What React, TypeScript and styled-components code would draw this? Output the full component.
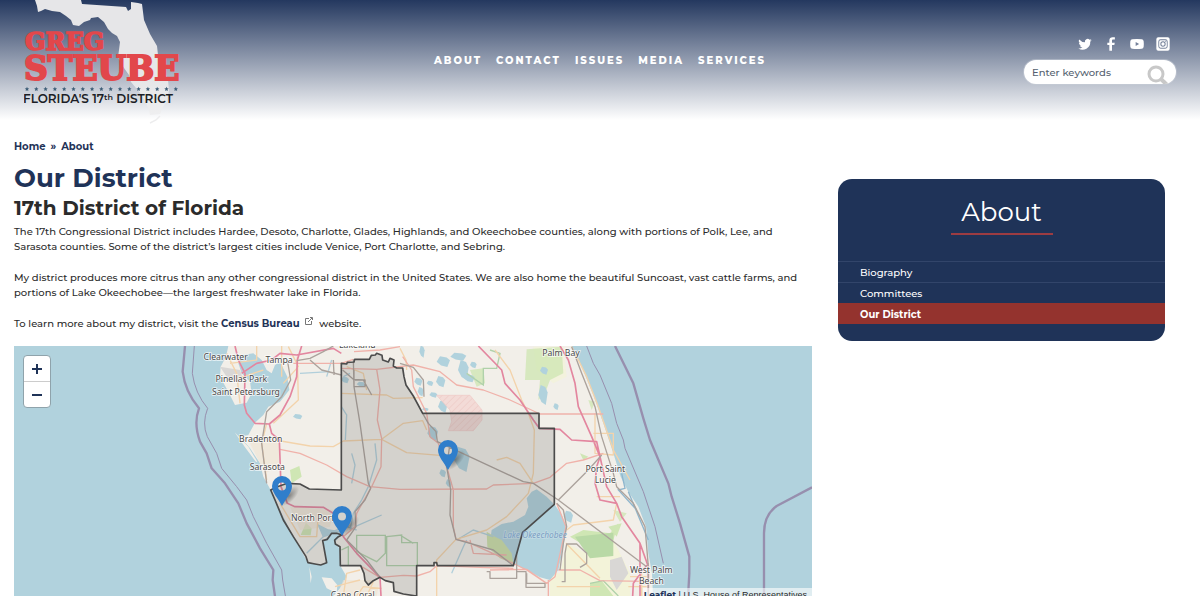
import React from 'react';
import styled, { createGlobalStyle, css } from 'styled-components';

const navy = '#1f3358';
const sans = "Montserrat, Inter, 'Open Sans', sans-serif";

const GlobalStyle = createGlobalStyle`
  * { box-sizing: border-box; }
  body {
    margin: 0;
    background: #fff;
    color: #2b2b2b;
    font-family: ${sans};
    font-size: 10px;
    font-weight: 500;
    line-height: 15px;
  }
  a { color: inherit; text-decoration: none; }
  h1, h2, p, ul, ol { margin: 0; padding: 0; }
  ul, ol { list-style: none; }
`;

const Page = styled.div`
  height: 100vh;
  overflow: hidden;
`;

const Header = styled.header`
  display: grid;
  grid-template-columns: 1fr auto 1fr;
  align-items: start;
  height: 124px;
  padding: 0 24px;
  background: linear-gradient(#24385f, #fff 120px);
`;

const LogoLink = styled.a`
  display: block;
  width: 160px;
  height: 124px;
`;

const Nav = styled.nav`
  display: flex;
  gap: 14px;
  padding-top: 53px;
`;

const NavLink = styled.a`
  color: #fff;
  font-weight: 800;
  letter-spacing: 2px;
  text-transform: uppercase;
`;

const Tools = styled.div`
  display: flex;
  flex-direction: column;
  align-items: flex-end;
  gap: 8px;
  padding-top: 36px;
`;

const Social = styled.div`
  display: flex;
  gap: 10px;
  padding-right: 5px;
`;

const SocialLink = styled.a`
  display: flex;
  width: 16px;
  height: 16px;
  color: #fff;
`;

const SearchForm = styled.form`
  display: flex;
  width: 152px;
  height: 24px;
  border-radius: 12px;
  background: #fff;
  overflow: hidden;
  box-shadow: 0 0 0 1px rgba(200, 205, 215, 0.5);
`;

const SearchInput = styled.input`
  flex: 1;
  min-width: 0;
  padding: 0 0 0 8px;
  border: 0;
  outline: 0;
  background: none;
  font: 500 10px ${sans};
  &::placeholder { color: #555f70; opacity: 1; }
`;

const SearchButton = styled.button`
  display: flex;
  width: 30px;
  padding: 4px 0 0;
  border: 0;
  background: none;
`;

const Main = styled.main`
  display: grid;
  grid-template-columns: minmax(0, 798fr) minmax(0, 327fr);
  gap: 26px;
  align-items: start;
  padding: 15px 35px 0 14px;
`;

const Breadcrumb = styled.ol`
  display: flex;
  gap: 5px;
  color: ${navy};
  font-weight: 700;
`;

const Title = styled.h1`
  padding-top: 8px;
  color: ${navy};
  font-size: 26px;
  line-height: 32px;
  font-weight: 700;
`;

const Subtitle = styled.h2`
  padding-bottom: 2px;
  font-size: 20px;
  line-height: 28px;
  font-weight: 700;
`;

const Copy = styled.div`
  display: flex;
  flex-direction: column;
  gap: 16px;
  padding-bottom: 15px;
`;

const TextLink = styled.a`
  color: ${navy};
  font-weight: 700;
  svg { margin: 0 4px 2px 5px; }
`;

const MapFrame = styled.div`
  position: relative;
  aspect-ratio: 798 / 256;
  overflow: hidden;
  background: #b1d2dd;
`;

const MapArt = styled.svg`
  display: block;
  width: 100%;
  height: 100%;
`;

const ZoomBar = styled.div`
  position: absolute;
  top: 9px;
  left: 9px;
  display: flex;
  flex-direction: column;
  width: 28px;
  border: 1px solid #8fa3ab;
  border-radius: 4px;
  background: #fff;
`;

const ZoomButton = styled.button`
  display: flex;
  align-items: center;
  justify-content: center;
  height: 25px;
  padding: 0;
  border: 0;
  background: none;
  & + & { height: 26px; border-top: 1px solid #ccc; }
`;

const Pin = styled.button<{ $x: number; $y: number }>`
  position: absolute;
  left: ${(p) => (p.$x / 798) * 100}%;
  top: ${(p) => (p.$y / 256) * 100}%;
  width: 32px;
  height: 30px;
  margin: -30px 0 0 -10px;
  padding: 0;
  border: 0;
  background: none;
`;

const Attribution = styled.div`
  position: absolute;
  right: 0;
  bottom: 0;
  padding: 0 5px 0 1px;
  background: rgba(255, 255, 255, 0.6);
  font: 9px/14px 'Liberation Sans', sans-serif;
  a { color: ${navy}; font-family: ${sans}; font-weight: 700; }
`;

const SideCard = styled.aside`
  margin-top: 40px;
  padding-bottom: 17px;
  border-radius: 14px;
  background: ${navy};
  color: #fff;
`;

const SideTitle = styled.h2`
  width: 102px;
  margin: 0 auto 26px;
  padding: 17px 0 5px;
  border-bottom: 2px solid #9c3c42;
  font-size: 26px;
  line-height: 32px;
  font-weight: 400;
  text-align: center;
`;

const SideLink = styled.a<{ $active?: boolean }>`
  display: block;
  padding: 3px 22px 2px;
  border-top: 1px solid #32456a;
  ${(p) => p.$active && css`
    border-color: #94332e;
    background: #94332e;
    font-weight: 700;
  `}
`;

const Logo = () => {
  const stars = Array.from({ length: 17 }, (_, i) => 27 + i * 9.3);
  return (
    <svg viewBox="24 0 160 124" width="160" height="124" role="img" aria-label="Greg Steube, Florida's 17th District">
      <defs>
        <linearGradient id="state" x1="0" y1="0" x2="0" y2="124" gradientUnits="userSpaceOnUse">
          <stop offset="0" stopColor="#e6e6e8" />
          <stop offset=".65" stopColor="#e6e6e8" />
          <stop offset="1" stopColor="#f1f1f2" />
        </linearGradient>
      </defs>
      <path
        fill="url(#state)"
        d="M35 0L37 6L38 12L41 11L45 9L52 11L60 12L66 16L71 20L73 25L79 26L84 22L90 20L91 18L98 17L104 22L108 29L112 33L117 36L120 42L119 50L118 57L121 63L124 68L129 75L131 82L136 88L140 93L146 103L149 110L150 115L160 114L163 107L167 101L169 90L168 80L163 68L158 55L157 46L150 34L144 20L142 4L138 3L131 2L131 9L128 11L126 7L82 4L81 0Z"
      />
      <path d="M150 123l6-3 4-4" fill="none" stroke="#ededee" strokeWidth="1.5" />
      <g fill="#e2474b" stroke="#e2474b" fontFamily="'DejaVu Serif', serif" fontWeight="700">
        <text x="25" y="50" fontSize="24" strokeWidth="1.6">GREG</text>
        <text x="24" y="80" fontSize="33" strokeWidth="2">STEUBE</text>
      </g>
      {stars.map((x) => (
        <path key={x} transform={`translate(${x} 89)`} fill="#3f5f78" d="M0-2.2L.7-.7L2.2-.6L1 .5L1.4 2L0 1.2L-1.4 2L-1 .5L-2.2-.6L-.7-.7Z" />
      ))}
      <text x="23" y="103" fontSize="12" fontWeight="600" fontFamily={sans} fill="#1c1e26">
        FLORIDA'S 17
        <tspan fontSize="8" dy="-3">th</tspan>
        <tspan dy="3"> DISTRICT</tspan>
      </text>
    </svg>
  );
};

const socials = [
  {
    name: 'Twitter',
    path: 'M22 6.2a8 8 0 0 1-2.3.6 4 4 0 0 0 1.8-2.2 8 8 0 0 1-2.6 1 4.1 4.1 0 0 0-7 3.7A11.600 11.600 0 0 1 3.400 5.100a4.100 4.100 0 0 0 1.300 5.500 4 4 0 0 1-1.900-.5 4.100 4.100 0 0 0 3.300 4 4 4 0 0 1-1.800.1 4.100 4.100 0 0 0 3.800 2.800A8.200 8.200 0 0 1 2 18.700 11.600 11.600 0 0 0 19.900 8.300 8 8 0 0 0 22 6.200Z',
  },
  { name: 'Facebook', path: 'M9.500 22V13.500H6.500V10H9.500V7C9.500 3.500 11.500 2 14.500 2H17.800V5.400H15.600C14 5.400 13.500 6 13.500 7.300V10H17.600L17 13.500H13.500V22Z' },
  { name: 'YouTube', path: 'M5 5Q12 4 19 5Q21.600 5.300 22 8Q22.500 12 22 16Q21.600 18.700 19 19Q12 20 5 19Q2.400 18.700 2 16Q1.500 12 2 8Q2.400 5.300 5 5ZM10 9V15L15.200 12Z' },
  {
    name: 'Instagram',
    path: 'M5 2H19Q22 2 22 5V19Q22 22 19 22H5Q2 22 2 19V5Q2 2 5 2ZM8.500 5Q5 5 5 8.500V15.500Q5 19 8.500 19H15.500Q19 19 19 15.500V8.500Q19 5 15.500 5ZM8.500 6.300H15.500Q17.700 6.300 17.700 8.500V15.500Q17.700 17.700 15.500 17.700H8.500Q6.300 17.700 6.300 15.500V8.500Q6.300 6.300 8.500 6.300ZM12 8A4 4 0 1 0 12 16A4 4 0 1 0 12 8ZM12 9.500A2.500 2.500 0 1 1 12 14.500A2.500 2.500 0 1 1 12 9.500ZM16 7.200A.8.8 0 1 0 16 8.800A.8.8 0 1 0 16 7.200Z',
  },
];

const district =
  'M424 70L440 72L442 67L462 66L464 58L508 58L514 46L526 45L530 40L546 46L548 60L565 66L570 55L582 60L580 78L590 84L608 84L612 110L618 135L640 168L668 220H1017V265H1063V493L968 577L940 677H712L710 668H702V677H650V768L610 762L582 754L580 728L556 722L540 712L520 722L505 735L495 722L492 700L482 677H421L420 620L406 612L404 600L415 590L425 585L410 580L395 580L382 598L368 602L375 640L380 668L362 675L345 672L324 668L318 650L280 590L250 540L225 480L212 450L232 440L262 430L300 432L328 447L424 450Z';

const pinkRoads = [
  'M105 18L115 60L135 100L133 195L140 220L165 250L208 252L240 225L270 170L290 110L292 60L305 18',
  'M208 252L215 280L238 300L243 440L262 490L285 500L370 502L400 520L430 590L470 640L540 712L543 768',
  'M125 100L170 70L215 60L240 40L290 45L400 25L424 40',
  'M835 18L905 90L915 130L960 180L1000 240L1018 265L1080 268L1115 300L1190 305L1200 350L1190 380L1185 430L1200 480L1250 490L1265 530L1320 610L1345 680L1345 768',
  'M1080 18L1105 60L1125 130L1135 200L1175 290L1200 350L1220 440L1250 490',
  'M1345 670L1300 730L1298 768',
  'M1320 610V768',
];

const redRoads = [
  'M240 328L300 340L380 375L440 410L510 440L600 448L860 447L880 435L1000 430L1050 412L1100 370L1150 360L1210 340',
  'M424 85L530 88L640 75L720 95L770 135L850 150L930 180L1020 222H1210',
  'M530 88L540 150L532 240L545 295L543 380L515 440L470 520L465 560L430 590',
  'M608 50L635 90L640 140L680 220L690 290L715 310L740 380L760 450L760 560L768 598L800 605L900 650L980 690L1040 730L1065 710L1098 560L1070 490',
  'M480 677L540 712L610 706L650 708L690 695L710 677L840 682L940 685',
  'M1075 690H1140L1200 722L1330 724',
  'M280 70H424L460 58M462 35L540 30L600 20',
  'M810 600L820 640L920 645M1045 768V720M870 690L980 688L1040 730',
];

const orangeRoads = [
  'M200 250L185 310L200 420M225 300L330 318L400 320L430 303L545 298L610 250L668 242L680 270',
  'M545 298L620 338L720 346M424 160L560 165L580 175L668 173',
  'M440 80L490 100L500 150M80 40L110 100L120 190M170 18V60L90 70M190 90L100 120M245 18V110',
  'M265 20L295 80L250 130M292 50L295 180L220 250',
  'M885 30L930 90L965 180L985 220L1003 270L1000 400L985 460L920 530L860 570L768 598L710 660V768',
  'M1000 430L960 370L920 352L890 360M1185 220V340L1240 345V280H1180',
  'M1190 470H1260M1250 490L1240 540L1120 555L1100 570M1098 610L1200 715M1070 740H1200M1290 710H1340M1285 740H1340',
  'M240 490L300 590H350L355 520M430 768L440 700L480 690M470 768L490 740L545 745M405 740L440 730L480 720M500 768L520 725',
  'M600 25L618 60L620 90M1115 20L1160 110L1195 200L1240 330L1290 420M1325 768V700',
];

const greyRoads = [
  'M262 60L272 120L245 170L200 215L185 310L200 430',
  'M290 62L330 55L370 35L400 18M330 60L365 90L424 105M400 60L402 105M460 58L462 140L480 250L505 430L512 445',
  'M428 90L460 118L490 120L515 165M465 120H495V140H462V90',
  'M512 445L495 480L465 515L468 560L440 600L500 660L540 712',
  'M668 220L685 250L708 275L712 305L970 425L1000 430L1075 480L1340 680',
  'M1075 480L1165 390L1205 345M750 310L740 380L752 450L750 525L768 598L880 630L940 677',
  'M1115 20L1145 100L1185 200L1205 290L1240 400L1250 440L1300 490L1335 560L1345 680V768',
  'M600 70L640 82L670 120L672 170M860 695H870V715H950V695H978V742H1035V730H980V700M1085 725H1095V640L1100 612H1130L1160 640V670L1140 682',
  'M1070 490L1090 510L1100 560L1090 610L1080 690M950 640V700',
];

const labels: [string, number, number][] = [
  ['Clearwater', 77, 60],
  ['Tampa', 237, 70],
  ['Pinellas Park', 124, 125],
  ['Saint Petersburg', 138, 164],
  ['Bradenton', 182, 307],
  ['Sarasota', 202, 391],
  ['North Port', 338, 543],
  ['Cape Coral', 458, 773],
  ['Lakeland', 472, 23],
  ['Palm Bay', 1083, 47],
  ['Port Saint', 1216, 397],
  ['Lucie', 1216, 430],
  ['West Palm', 1354, 699],
  ['Beach', 1354, 731],
];

const ponds: [number, number, number, number][] = [
  [722, 125, 14, 17], [666, 35, 8, 18], [730, 65, 20, 16], [775, 50, 24, 12], [790, 90, 16, 30], [808, 115, 16, 12],
  [700, 165, 12, 8], [655, 125, 12, 12], [662, 155, 9, 14], [690, 130, 10, 8], [1029, 165, 14, 30], [1032, 92, 12, 12],
  [1068, 200, 8, 10], [785, 358, 24, 38], [728, 400, 10, 12], [746, 430, 9, 12], [698, 280, 16, 22], [1105, 530, 14, 18],
  [435, 120, 12, 10], [484, 133, 14, 8], [293, 230, 14, 8], [728, 200, 14, 18], [820, 75, 10, 10], [676, 208, 10, 5],
];

const Roads = ({ lines, color, width }: { lines: string[]; color: string; width: number }) => (
  <path d={lines.join('')} fill="none" stroke={color} strokeWidth={width} strokeLinejoin="round" />
);

const DistrictMap = () => (
  <MapArt viewBox="-558 18 2394 768" role="img" aria-label="Map of the 17th District of Florida">
    <defs>
      <pattern id="hatch" width="14" height="14" patternUnits="userSpaceOnUse" patternTransform="rotate(45)">
        <rect width="14" height="14" fill="#f3dbd7" />
        <path d="M0 0V14" stroke="#edc5c1" strokeWidth="3" />
      </pattern>
    </defs>
    <path
      fill="#f2efe9"
      d="M85 18L78 50L62 80L60 110L85 155L105 195L140 188L155 160L150 125L125 100L115 70L128 45L160 40L185 60L200 90L215 100L225 75L240 65L262 110L268 150L240 185L205 200L190 225L165 248L145 285L120 290L150 325L180 370L190 410L212 450L240 510L280 590L324 668L362 675L380 668L370 602L395 580L425 585L405 605L421 630V677L440 710L420 745L400 768L402 790H1360L1356 700L1345 640L1338 560L1315 500L1285 455L1262 410L1240 340L1210 250L1180 165L1145 80L1115 18Z"
    />
    <path fill="#f2efe9" d="M104 277L145 320L172 365L168 366L135 322Z M365 712L395 715L412 735L410 760L380 745Z M328 680L335 710L332 730Z" />
    <g fill="#f3f3d9">
      <path d="M1100 610L1180 650L1240 600L1290 700V786H1050V700H1080Z" />
      <path d="M1000 20H1090L1100 110L1060 130L1010 90Z" opacity=".8" />
    </g>
    <g fill="#cfe6b4">
      <path d="M980 28L1085 20L1090 100L1050 120L1035 160L1015 180L1020 120L975 120Z" opacity=".8" />
      <path d="M1170 730L1205 722L1240 768H1170Z M1110 590L1150 570L1230 580L1255 550L1240 600L1160 620Z" />
      <path d="M270 390L298 378L305 410L275 430Z M302 585L318 548L335 565L332 586Z M1140 340L1165 350L1150 360Z M1225 560L1265 550L1250 590Z" />
      <path d="M1165 180L1185 185L1175 210Z M1240 510L1280 520L1260 545Z M810 90L850 85L855 130L830 140Z" opacity=".8" />
    </g>
    <path fill="#b9d9a6" d="M1125 590L1240 578V648L1170 655Z" />
    <path fill="#d9d7d5" d="M1230 660L1265 650L1285 700L1250 750L1230 710Z M60 80L120 90L130 120L90 125Z M1205 90L1200 130Z" />
    <path fill="#efe2d2" d="M140 290L240 300L235 380L195 400Z M270 500L400 510L390 560L300 570Z M430 720L540 720L530 768H410Z" opacity=".6" />
    <path fill="#b1d2dd" d="M995 455L1010 448L1040 470L1065 495L1085 525L1098 560L1090 620L1075 690L1050 720L1020 712L980 690L940 672L930 640L905 612L872 590L875 570L905 552L940 545L975 525L985 500L980 475Z" />
    <path fill="#cde0ab" d="M860 575L885 590L905 600L935 640L940 672L900 655L862 620Z" />
    {ponds.map(([x, y, rx, ry]) => (
      <path key={`${x}-${y}`} fill="#b1d2dd" d={`M${x - rx} ${y}L${x - rx / 2} ${y - ry}L${x + rx / 2} ${y - ry * 0.8}L${x + rx} ${y - ry / 4}L${x + rx * 0.6} ${y + ry}L${x - rx / 3} ${y + ry * 0.7}Z`} />
    ))}
    <path fill="url(#hatch)" stroke="#efc8c5" strokeWidth="2" d="M710 166H810L846 210V240L820 272H745L755 245L750 210Z" />
    <g fill="none" stroke="#b1cfdb" strokeWidth="4">
      <path d="M525 310L530 360L505 440L485 480L460 520L450 570M455 340L465 375L455 430M465 560L545 525M320 640L380 580L440 560L470 570M770 600L820 570L880 590M755 700L790 620L800 600M424 200L440 225L436 300M395 60L380 110M300 100L390 95M430 110L450 100" />
      <path d="M1265 400L1275 445L1255 450L1310 510M1285 455L1345 600" stroke="#8fb6cd" />
      <path d="M355 555L385 570L420 575L425 585L395 582L370 590Z" fill="#b1d2dd" />
    </g>
    <path
      fill="none"
      stroke="#b0d1aa"
      strokeWidth="4"
      d="M470 586H556V640L530 665L500 650L470 635ZM560 590L605 585V608H652V677H560ZM424 630L445 620V677M800 100L850 135V85H890L900 40L870 30M1170 730L1210 722L1255 768M600 585L640 610"
    />
    <Roads lines={orangeRoads} color="#f3d3ab" width={4} />
    <Roads lines={redRoads} color="#f0b2aa" width={4} />
    <Roads lines={pinkRoads} color="#e3869f" width={5} />
    <Roads lines={greyRoads} color="#aba29c" width={4} />
    <g fill="none" stroke="#978fae" strokeLinejoin="round">
      <path strokeWidth="7" d="M-45 18L-52 95Q-45 155-3 205Q-20 250 0 305L20 340L35 385L75 430L115 490L140 550L180 625L220 690L218 720L228 790M1245 18L1300 130L1330 235L1350 300L1405 430L1415 470L1440 550L1468 650V700L1463 790M1836 442L1730 498Q1692 525 1692 580V790" />
      <path strokeWidth="3" d="M-17 18L-23 100Q-15 160 23 205Q5 250 22 290L50 340L65 385L110 440L140 480L160 530L200 610L245 690L248 720L260 790M1160 18L1180 70L1200 105L1235 190L1250 250L1270 300L1275 325L1330 455L1365 560L1390 670" />
    </g>
    <path d={district} fill="#555" fillOpacity=".19" stroke="#4b4b4b" strokeWidth="5" strokeLinejoin="round" />
    <g fontFamily="'Noto Sans', sans-serif" fontSize="26" fontWeight="400" textAnchor="middle" fill="#4a4a4a" stroke="#fff" strokeOpacity=".75" strokeWidth="5" paintOrder="stroke">
      {labels.map(([name, x, y]) => (
        <text key={name} x={x} y={y}>{name}</text>
      ))}
      <text x="1005" y="595" fontSize="25" fontStyle="italic" fill="#7d9fc4" strokeOpacity=".2">Lake Okeechobee</text>
    </g>
  </MapArt>
);

const pins = [
  { name: 'Venice office', x: 268, y: 160 },
  { name: 'Punta Gorda office', x: 328, y: 190 },
  { name: 'Sebring office', x: 434, y: 124 },
];

export default function App() {
  return (
    <Page>
      <GlobalStyle />
      <Header>
        <LogoLink href="#"><Logo /></LogoLink>
        <Nav>
          {['About', 'Contact', 'Issues', 'Media', 'Services'].map((item) => (
            <NavLink key={item} href="#">{item}</NavLink>
          ))}
        </Nav>
        <Tools>
          <Social>
            {socials.map((s) => (
              <SocialLink key={s.name} href="#" aria-label={s.name}>
                <svg viewBox="0 0 24 24" width="16" height="16"><path d={s.path} fill="currentColor" fillRule="evenodd" /></svg>
              </SocialLink>
            ))}
          </Social>
          <SearchForm>
            <SearchInput type="text" placeholder="Enter keywords" aria-label="Enter keywords" />
            <SearchButton type="button" aria-label="Search">
              <svg viewBox="0 0 24 24" width="24" height="24" fill="none" stroke="#c8c8c8" strokeWidth="3">
                <circle cx="10" cy="10" r="7" />
                <path d="M15 15l6 6" strokeWidth="4" />
              </svg>
            </SearchButton>
          </SearchForm>
        </Tools>
      </Header>
      <Main>
        <article>
          <Breadcrumb>
            <li><a href="#">Home</a></li>
            <li aria-hidden="true">»</li>
            <li><a href="#">About</a></li>
          </Breadcrumb>
          <Title>Our District</Title>
          <Subtitle>17th District of Florida</Subtitle>
          <Copy>
            <p>
              The 17th Congressional District includes Hardee, Desoto, Charlotte, Glades, Highlands, and Okeechobee counties, along with portions of Polk, Lee, and
              Sarasota counties. Some of the district’s largest cities include Venice, Port Charlotte, and Sebring.
            </p>
            <p>
              My district produces more citrus than any other congressional district in the United States. We are also home the beautiful Suncoast, vast cattle farms, and
              portions of Lake Okeechobee—the largest freshwater lake in Florida.
            </p>
            <p>
              To learn more about my district, visit the{' '}
              <TextLink href="#">
                Census Bureau
                <svg viewBox="0 0 8 8" width="8" height="8" fill="none" stroke="#777" aria-hidden="true">
                  <path d="M4 1.500H.5V7.500H6.500V4M3 5L7 1M5 .5H7.500V3" />
                </svg>
              </TextLink>{' '}
              website.
            </p>
          </Copy>
          <MapFrame>
            <DistrictMap />
            {pins.map((p) => (
              <Pin key={p.name} $x={p.x} $y={p.y} aria-label={p.name}>
                <svg viewBox="0 0 32 30" width="32" height="30">
                  <defs>
                    <radialGradient id="shade">
                      <stop offset="0" stopColor="#333" stopOpacity=".5" />
                      <stop offset="1" stopColor="#333" stopOpacity="0" />
                    </radialGradient>
                  </defs>
                  <ellipse cx="17" cy="20" rx="13" ry="6" transform="rotate(-45 17 20)" fill="url(#shade)" />
                  <path fillRule="evenodd" fill="#2f7ecb" d="M10 0A10 10 0 0 1 20 10C20 17 14 22 10 30C6 22 0 17 0 10A10 10 0 0 1 10 0ZM10 6.500A4 4 0 1 0 10 14.500A4 4 0 1 0 10 6.500Z" />
                </svg>
              </Pin>
            ))}
            <ZoomBar>
              <ZoomButton aria-label="Zoom in">
                <svg width="12" height="12" stroke={navy} strokeWidth="2"><path d="M1 6H11M6 1V11" /></svg>
              </ZoomButton>
              <ZoomButton aria-label="Zoom out">
                <svg width="12" height="12" stroke={navy} strokeWidth="2"><path d="M1 6H11" /></svg>
              </ZoomButton>
            </ZoomBar>
            <Attribution><a href="#">Leaflet</a> | U.S. House of Representatives</Attribution>
          </MapFrame>
        </article>
        <SideCard>
          <SideTitle>About</SideTitle>
          <ul>
            <li><SideLink href="#">Biography</SideLink></li>
            <li><SideLink href="#">Committees</SideLink></li>
            <li><SideLink href="#" $active>Our District</SideLink></li>
          </ul>
        </SideCard>
      </Main>
    </Page>
  );
}
